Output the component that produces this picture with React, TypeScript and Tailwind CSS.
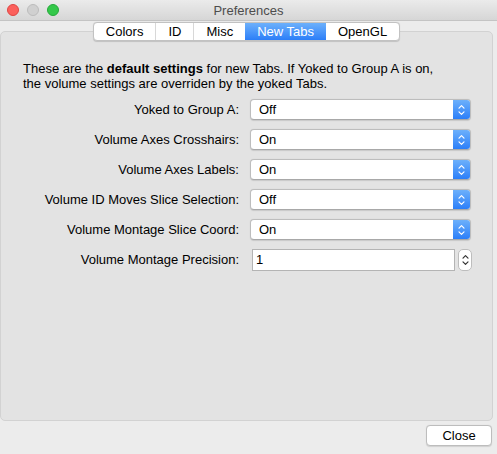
const rows: { label: string; value: string }[] = [
  { label: 'Yoked to Group A:', value: 'Off' },
  { label: 'Volume Axes Crosshairs:', value: 'On' },
  { label: 'Volume Axes Labels:', value: 'On' },
  { label: 'Volume ID Moves Slice Selection:', value: 'Off' },
  { label: 'Volume Montage Slice Coord:', value: 'On' },
]

const tabs = ['Colors', 'ID', 'Misc', 'New Tabs', 'OpenGL']

const Chevrons = ({ color }: { color: string }) => (
  <svg width="7" height="12" viewBox="0 0 7 12" fill="none" stroke={color} strokeWidth="1.2" strokeLinecap="round" strokeLinejoin="round">
    <path d="M1 4.2 L3.5 1.7 L6 4.2" />
    <path d="M1 7.8 L3.5 10.3 L6 7.8" />
  </svg>
)

const Select = ({ value }: { value: string }) => (
  <div className="flex h-[21px] w-[221px] rounded-[4px] border border-[#bdbdbd] border-b-[#a8a8a8] bg-white shadow-[0_0.5px_1px_rgba(0,0,0,0.12)] overflow-hidden">
    <span className="flex-1 pl-[8px] leading-[19px]">{value}</span>
    <span className="w-[17px] flex items-center justify-center bg-gradient-to-b from-[#6cb0fb] to-[#2b7ef8]">
      <Chevrons color="#ffffff" />
    </span>
  </div>
)

const App = () => {
  return (
    <div
      className="w-[497px] h-[454px] bg-[#ececec] flex flex-col overflow-hidden text-[13px] text-black"
      style={{ fontFamily: '"Liberation Sans", Arial, sans-serif' }}
    >
      {/* title bar */}
      <div className="h-[21px] flex items-center bg-gradient-to-b from-[#ebebeb] to-[#d6d6d6] border-b border-[#c4c4c4]">
        <div className="w-[100px] flex items-center gap-[8px] pl-[7px]">
          <span className="w-[12px] h-[12px] rounded-full bg-[#fc605c] border border-[#de4643]" />
          <span className="w-[12px] h-[12px] rounded-full bg-[#d0d0d0] border border-[#bcbcbc]" />
          <span className="w-[12px] h-[12px] rounded-full bg-[#34c84a] border border-[#25a93a]" />
        </div>
        <div className="flex-1 text-center text-[#4d4d4d] leading-[21px]">Preferences</div>
        <div className="w-[100px]" />
      </div>

      {/* tabs + panel */}
      <div className="pr-[4px] mt-[1px]">
        <div className="relative z-10 flex justify-center h-[19px]">
          <div className="flex h-[19px] rounded-[4px] border border-[#c2c2c2] bg-white shadow-[0_0.5px_1px_rgba(0,0,0,0.15)] overflow-hidden">
            {tabs.map((t, i) => (
              <div
                key={t}
                className={
                  t === 'New Tabs'
                    ? 'px-[12px] leading-[17px] text-white bg-gradient-to-b from-[#6cb0fb] to-[#2b7ef8]'
                    : i > 0 && tabs[i - 1] !== 'New Tabs'
                      ? 'px-[12px] leading-[17px] border-l border-[#d8d8d8]'
                      : 'px-[12px] leading-[17px]'
                }
              >
                {t}
              </div>
            ))}
          </div>
        </div>
        <div className="-mt-[10px] h-[390px] rounded-[5px] border border-[#d2d2d2] bg-[#e3e3e3] pt-[29px]">
          <p className="pl-[22px] leading-[15px]">
            These are the <b>default settings</b> for new Tabs. If Yoked to Group A is on,
            <br />
            the volume settings are overriden by the yoked Tabs.
          </p>
          <div className="mt-[8px] flex flex-col gap-[9px]">
            {rows.map(r => (
              <div key={r.label} className="flex items-center">
                <span className="w-[238px] text-right">{r.label}</span>
                <span className="ml-[11px]">
                  <Select value={r.value} />
                </span>
              </div>
            ))}
            <div className="flex items-center">
              <span className="w-[238px] text-right">Volume Montage Precision:</span>
              <span className="ml-[13px] w-[203px] h-[22px] border border-[#b4b4b4] bg-white pl-[3px] leading-[20px]">1</span>
              <span className="ml-[3px] w-[14px] h-[22px] rounded-[5px] border border-[#bdbdbd] bg-white flex items-center justify-center">
                <Chevrons color="#333333" />
              </span>
            </div>
          </div>
        </div>
      </div>

      {/* footer */}
      <div className="flex justify-end pr-[5px] pt-[4px]">
        <button className="w-[66px] h-[21px] rounded-[4px] border border-[#bdbdbd] bg-white shadow-[0_0.5px_1px_rgba(0,0,0,0.12)] leading-[19px]">
          Close
        </button>
      </div>
    </div>
  )
}

export default App
